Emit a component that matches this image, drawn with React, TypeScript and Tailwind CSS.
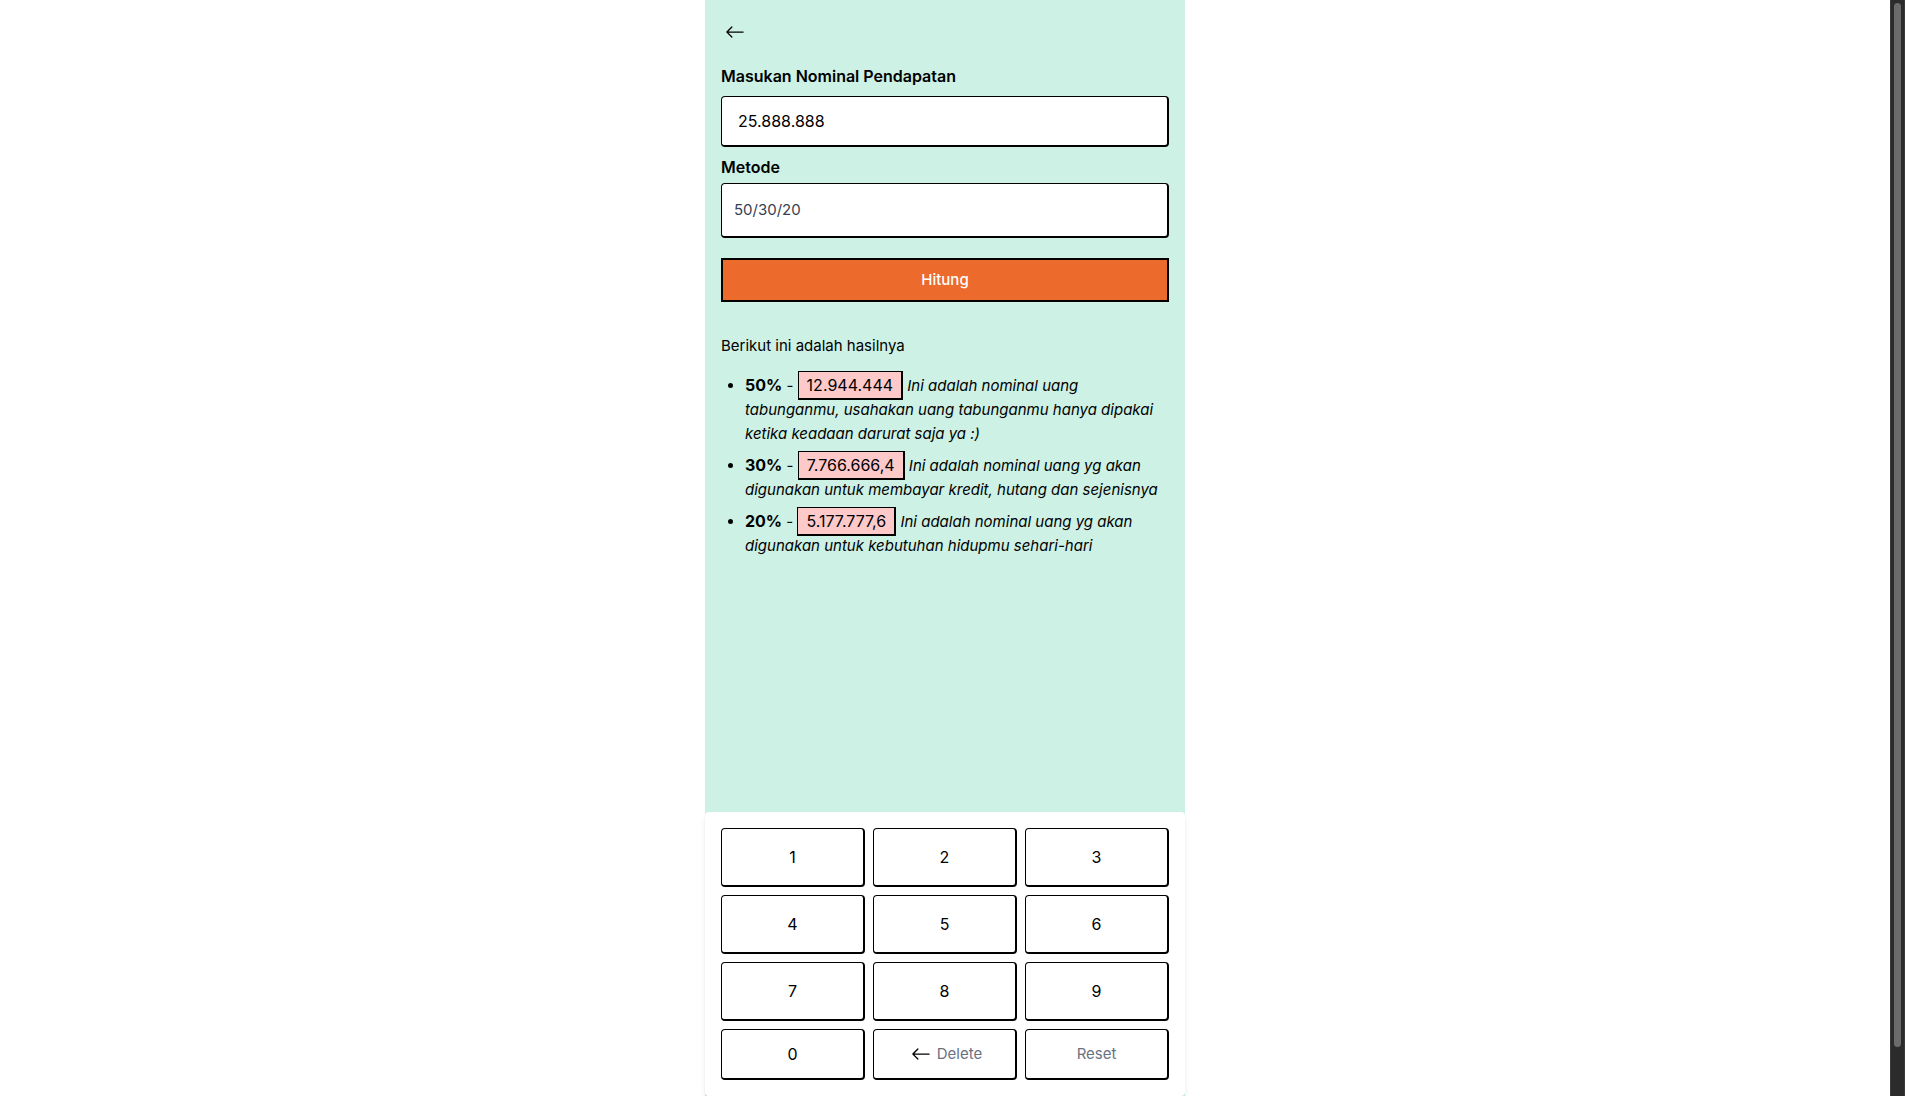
import { useState } from 'react';
import { BsArrowLeft } from 'react-icons/bs';

const boxed = 'border border-r-2 border-b-2 border-black';

const results = [
  {
    percent: '50%',
    amount: '12.944.444',
    note: 'Ini adalah nominal uang tabunganmu, usahakan uang tabunganmu hanya dipakai ketika keadaan darurat saja ya :)',
  },
  {
    percent: '30%',
    amount: '7.766.666,4',
    note: 'Ini adalah nominal uang yg akan digunakan untuk membayar kredit, hutang dan sejenisnya',
  },
  {
    percent: '20%',
    amount: '5.177.777,6',
    note: 'Ini adalah nominal uang yg akan digunakan untuk kebutuhan hidupmu sehari-hari',
  },
];

const digits = ['1', '2', '3', '4', '5', '6', '7', '8', '9'];

function format(value: string) {
  return value.replace(/\D/g, '').replace(/\B(?=(\d{3})+$)/g, '.');
}

function Keypad({ onDigit, onDelete, onReset }: { onDigit: (d: string) => void; onDelete: () => void; onReset: () => void }) {
  return (
    <div className="mt-auto grid grid-cols-3 gap-2 rounded bg-white p-4 shadow-md">
      {digits.map((d) => (
        <button key={d} type="button" onClick={() => onDigit(d)} className={`${boxed} rounded bg-white py-4`}>
          {d}
        </button>
      ))}
      <button type="button" onClick={() => onDigit('0')} className={`${boxed} rounded bg-white py-3`}>
        0
      </button>
      <button type="button" onClick={onDelete} className={`${boxed} flex items-center justify-center gap-0.5 rounded bg-white py-3`}>
        <BsArrowLeft size={20} className="mx-1" />
        <span className="text-[15px] leading-6 text-gray-500">Delete</span>
      </button>
      <button type="button" onClick={onReset} className={`${boxed} rounded bg-white py-3 text-[15px] leading-6 text-gray-500`}>
        Reset
      </button>
    </div>
  );
}

export default function App() {
  const [income, setIncome] = useState('25.888.888');

  return (
    <div className="flex min-h-screen bg-white font-['Inter',sans-serif] text-base text-black">
      <div className="flex flex-1 justify-center">
        <main className="flex w-full max-w-[480px] flex-col bg-[#cdf1e5]">
          <div className="px-4 pt-[18px]">
            <button type="button" aria-label="Kembali" className="block p-1">
              <BsArrowLeft size={20} />
            </button>
            <form className="mt-[18px] flex flex-col" onSubmit={(e) => e.preventDefault()}>
              <label htmlFor="income" className="mb-2 font-semibold">
                Masukan Nominal Pendapatan
              </label>
              <input
                id="income"
                type="text"
                value={income}
                onChange={(e) => setIncome(format(e.target.value))}
                className={`${boxed} mb-2 rounded bg-white px-4 py-3`}
              />
              <label htmlFor="method" className="mb-1 font-semibold">
                Metode
              </label>
              <select
                id="method"
                className={`${boxed} mb-5 h-[55px] appearance-none rounded bg-white px-3 text-[15px] leading-6 text-gray-700`}
              >
                <option>50/30/20</option>
              </select>
              <button type="submit" className="border-2 border-black bg-[#ec6a2c] py-2 text-[15px] leading-6 font-medium text-white">
                Hitung
              </button>
            </form>
            <section className="mt-8 text-[15px] leading-6">
              <p>Berikut ini adalah hasilnya</p>
              <ul className="mt-4 ml-6 list-disc space-y-2">
                {results.map((r) => (
                  <li key={r.percent}>
                    <b className="text-base leading-5 font-bold">{r.percent}</b> -{' '}
                    <span className={`${boxed} bg-[#fdc9c9] px-2 py-[3px] text-base leading-5`}>{r.amount}</span>{' '}
                    <i>{r.note}</i>
                  </li>
                ))}
              </ul>
            </section>
          </div>
          <Keypad
            onDigit={(d) => setIncome(format(income + d))}
            onDelete={() => setIncome(format(income.slice(0, -1)))}
            onReset={() => setIncome('')}
          />
        </main>
      </div>
      <div aria-hidden="true" className="flex w-[15px] flex-col border-x border-[#3a3a3a] bg-[#2b2b2b] px-[3px] pt-[3px] pb-[49px]">
        <div className="flex-1 rounded-full bg-[#6b6b6b]" />
      </div>
    </div>
  );
}
